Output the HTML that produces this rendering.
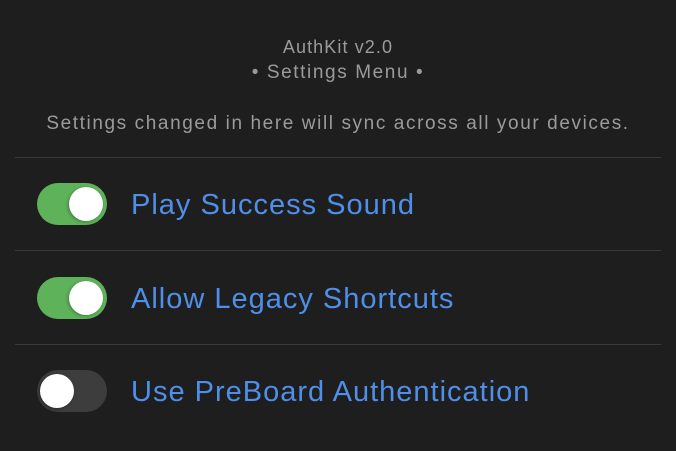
<!DOCTYPE html>
<html><head><meta charset="utf-8"><style>
body{margin:0;width:676px;height:451px;background:#1e1e1e;font-family:"Liberation Sans",sans-serif;position:relative;overflow:hidden}
.c{position:absolute;left:0;width:676px;text-align:center;color:#9b9b9b}
.hr{position:absolute;left:15px;width:646px;height:1px;background:#3a3a3a}
.tg{position:absolute;left:37px;width:70px;height:42px;border-radius:21px;background:#5eb25a}
.tg::after{content:"";position:absolute;top:4px;left:32px;width:34px;height:34px;border-radius:50%;background:#fff;box-shadow:-1px 1px 3px rgba(0,0,0,.3)}
.tg.off{background:#3d3d3d}
.tg.off::after{left:3px}
.l{position:absolute;left:131px;color:#4f8fe9;font-size:29px;letter-spacing:1.0px}
</style></head><body>
<div class="c" style="top:37px;font-size:18px;letter-spacing:1.1px">AuthKit v2.0</div>
<div class="c" style="top:62px;font-size:19px;letter-spacing:1.6px">• Settings Menu •</div>
<div class="c" style="top:113px;font-size:19px;letter-spacing:1.6px">Settings changed in here will sync across all your devices.</div>
<div class="hr" style="top:157px"></div>
<div class="tg" style="top:183px"></div><div class="l" style="top:189px">Play Success Sound</div>
<div class="hr" style="top:250px"></div>
<div class="tg" style="top:277px"></div><div class="l" style="top:283px">Allow Legacy Shortcuts</div>
<div class="hr" style="top:344px"></div>
<div class="tg off" style="top:370px"></div><div class="l" style="top:376px">Use PreBoard Authentication</div>
</body></html>
